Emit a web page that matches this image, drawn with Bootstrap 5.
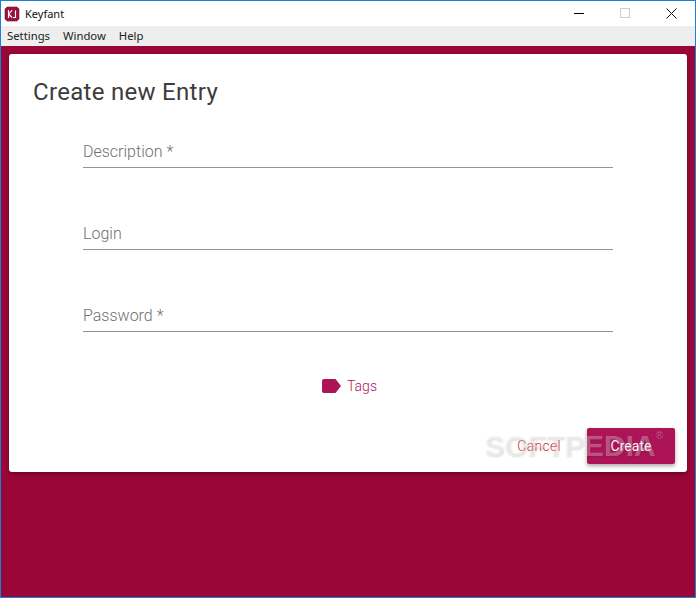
<!DOCTYPE html>
<html lang="en">
<head>
<meta charset="utf-8">
<title>Keyfant</title>
<link href="https://cdn.jsdelivr.net/npm/bootstrap@5.3.0/dist/css/bootstrap.min.css" rel="stylesheet">
<style>
html,body{height:100%;margin:0;overflow:hidden;background:#9b0638}
body{font-family:"Roboto","Liberation Sans",sans-serif}
.app-win{width:696px;height:598px;border:1px solid #1683d8;display:flex;flex-direction:column;background:#9b0638}
.title-row{height:25px;background:#fff;padding-left:3px;flex:none}
.title-text{font:11px "Noto Sans","Liberation Sans",sans-serif;color:#111;margin-left:5px}
.win-btns{margin-left:auto;height:25px;padding-right:1px}
.win-btn{width:46px;height:25px;display:flex;align-items:center;justify-content:center}
.menu-row{height:20px;background:#eee;padding-left:6px;gap:13px;flex:none;font:11.3px "Noto Sans","Liberation Sans",sans-serif;color:#222;line-height:20px}
.stage{flex:1;padding:8px 8px 0 8px}
.entry-card{position:relative;width:678px;height:418px;background:#fff;border:0;border-radius:3px;box-shadow:0 2px 4px rgba(0,0,0,.35);padding:0 24px}
.entry-title{font-size:24px;font-weight:400;color:#3c3c3c;line-height:28px;margin:24px 0 0;letter-spacing:.3px}
.field-stack{margin:0 50px;width:530px;display:flex;flex-direction:column;gap:46px;padding-top:26px}
.line-field{height:36px;border-bottom:1px solid #949494;font-size:16px;font-weight:300;color:#707070;display:flex;align-items:flex-end;padding-bottom:5px;line-height:20px}
.tag-row{margin-top:44px;color:#ad1457;font-size:14px;font-weight:300;line-height:20px;gap:6px;margin-left:3px}
.act-row{position:absolute;right:12px;bottom:8px;align-items:center}
.act-cancel{color:#d32f3a;font-size:14px;font-weight:300;padding:0 26px 0 0;background:none;border:0;line-height:36px;letter-spacing:.3px}
.act-create{width:88px;height:36px;background:#ad1457;color:#fff;font-size:14px;border:0;border-radius:2px;padding:0;box-shadow:0 2px 4px rgba(0,0,0,.35)}
.soft-mark{position:absolute;left:475px;top:374px;font:700 30px "Liberation Sans",sans-serif;color:rgba(255,255,255,.3);text-shadow:1px 1px 2px rgba(0,0,0,.13);line-height:36px;pointer-events:none;white-space:nowrap}
.soft-mark sup{font-size:10px;font-weight:400;top:-17px}
</style>
</head>
<body>
<div class="app-win">
  <div class="title-row d-flex align-items-center">
    <svg width="16" height="16" viewBox="0 0 16 16"><path d="M3 1h10l2 2v10l-2 2H3l-2-2V3z" fill="#9b1440" stroke="#6f1a35" stroke-width=".6"/><path d="M4.500 4v8M4.700 8 8 4.300M4.700 8 8 11.500" stroke="#fff" stroke-width="1.100" fill="none"/><path d="M11.500 4.500v7H9" stroke="#fff" stroke-width="1.100" fill="none"/></svg>
    <span class="title-text">Keyfant</span>
    <div class="win-btns d-flex">
      <div class="win-btn"><svg width="11" height="11"><path d="M0 5.500h10" stroke="#000"/></svg></div>
      <div class="win-btn"><svg width="11" height="11"><rect x=".5" y=".5" width="9" height="9" fill="none" stroke="#ccc"/></svg></div>
      <div class="win-btn"><svg width="11" height="11"><path d="M.5.5l10 10M10.500.5l-10 10" stroke="#111"/></svg></div>
    </div>
  </div>
  <div class="menu-row d-flex"><span>Settings</span><span>Window</span><span>Help</span></div>
  <div class="stage">
    <div class="card entry-card">
      <h1 class="entry-title">Create new Entry</h1>
      <div class="field-stack">
        <div class="line-field">Description *</div>
        <div class="line-field">Login</div>
        <div class="line-field">Password *</div>
      </div>
      <div class="tag-row d-flex justify-content-center align-items-center">
        <svg width="19" height="14" viewBox="0 0 19 14"><path d="M2 0h11.500l5.500 7-5.500 7H2a2 2 0 0 1-2-2V2a2 2 0 0 1 2-2z" fill="#ad1457"/></svg>
        <span>Tags</span>
      </div>
      <div class="act-row d-flex">
        <button type="button" class="btn act-cancel">Cancel</button>
        <button type="button" class="btn act-create">Create</button>
      </div>
      <div class="soft-mark">SOFTPEDIA<sup>®</sup></div>
    </div>
  </div>
</div>
</body>
</html>
